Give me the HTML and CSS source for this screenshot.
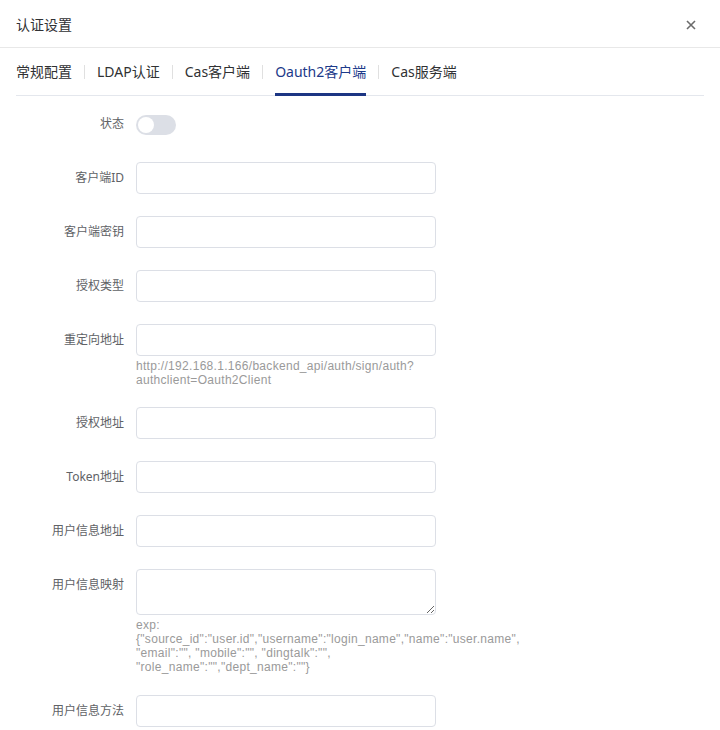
FILE: index.html
```html
<!DOCTYPE html>
<html lang="zh-CN">
<head>
<meta charset="utf-8">
<title>认证设置</title>
<link rel="stylesheet" href="styles.css">
</head>
<body>
<div class="dialog">
  <div class="header">
    <span class="title">认证设置</span>
    <svg class="close" width="10" height="10" viewBox="0 0 10 10"><path d="M1 1L9 9M9 1L1 9" stroke="#6b6b6b" stroke-width="1.6" fill="none"/></svg>
  </div>
  <div class="tabs">
    <div class="tab">常规配置</div>
    <span class="sep"></span>
    <div class="tab">LDAP认证</div>
    <span class="sep"></span>
    <div class="tab">Cas客户端</div>
    <span class="sep"></span>
    <div class="tab active">Oauth2客户端</div>
    <span class="sep"></span>
    <div class="tab">Cas服务端</div>
  </div>
  <form class="form">
    <div class="row">
      <label class="label">状态</label>
      <div class="control"><span class="switch"><span class="knob"></span></span></div>
    </div>
    <div class="row">
      <label class="label">客户端ID</label>
      <div class="control"><input class="input" type="text"></div>
    </div>
    <div class="row">
      <label class="label">客户端密钥</label>
      <div class="control"><input class="input" type="text"></div>
    </div>
    <div class="row">
      <label class="label">授权类型</label>
      <div class="control"><input class="input" type="text"></div>
    </div>
    <div class="row row-help">
      <label class="label">重定向地址</label>
      <div class="control">
        <input class="input" type="text">
        <div class="help">http://192.168.1.166/backend_api/auth/sign/auth?<br>authclient=Oauth2Client</div>
      </div>
    </div>
    <div class="row">
      <label class="label">授权地址</label>
      <div class="control"><input class="input" type="text"></div>
    </div>
    <div class="row">
      <label class="label">Token地址</label>
      <div class="control"><input class="input" type="text"></div>
    </div>
    <div class="row">
      <label class="label">用户信息地址</label>
      <div class="control"><input class="input" type="text"></div>
    </div>
    <div class="row row-help row-help-lg">
      <label class="label">用户信息映射</label>
      <div class="control">
        <textarea class="textarea"></textarea>
        <div class="help">exp:<br>{"source_id":"user.id","username":"login_name","name":"user.name",<br>"email":"", "mobile":"", "dingtalk":"",<br>"role_name":"","dept_name":""}</div>
      </div>
    </div>
    <div class="row">
      <label class="label">用户信息方法</label>
      <div class="control"><input class="input" type="text"></div>
    </div>
  </form>
</div>
</body>
</html>
```

FILE: styles.css
```css
html, body {
  margin: 0;
  padding: 0;
  background: #ffffff;
}
body {
  font-family: "Noto Sans", "Noto Sans CJK SC", sans-serif;
  color: #303133;
  width: 720px;
  height: 730px;
  overflow: hidden;
}
.dialog {
  width: 720px;
}
.header {
  height: 48px;
  box-sizing: border-box;
  border-bottom: 1px solid #e8e8e8;
  display: flex;
  align-items: center;
  justify-content: space-between;
  padding: 0 24px 0 16px;
}
.title {
  font-size: 14px;
  color: #303133;
  line-height: 20px;
  margin-top: 2px;
}
.close {
  display: block;
  margin-top: 2px;
}
.tabs {
  margin: 0 16px;
  height: 48px;
  box-sizing: border-box;
  border-bottom: 1px solid #e4e7ed;
  display: flex;
  align-items: stretch;
}
.tab {
  font-size: 14px;
  line-height: 20px;
  color: #303133;
  display: flex;
  align-items: center;
  border-bottom: 2px solid transparent;
  margin-bottom: -1px;
  padding-top: 1px;
  white-space: nowrap;
}
.tab.active {
  color: #1c3a8a;
  border-bottom: 3px solid #1c3583;
  padding-top: 2px;
}
.sep {
  width: 1px;
  height: 14px;
  background: #e0e0e0;
  align-self: center;
  margin: 1px 12px 0;
}
.form {
  padding-top: 12px;
  margin: 0;
}
.row {
  display: flex;
  align-items: flex-start;
  margin-bottom: 22px;
}
.row-help {
  margin-bottom: 20px;
}
.row-help-lg {
  margin-bottom: 21px;
}
.label {
  width: 136px;
  box-sizing: border-box;
  padding-right: 12px;
  text-align: right;
  font-size: 12px;
  line-height: 32px;
  color: #606266;
  flex: none;
}
.control {
  flex: none;
  width: 420px;
}
.switch {
  display: inline-block;
  position: relative;
  width: 40px;
  height: 20px;
  border-radius: 10px;
  background: #dcdfe6;
  margin-top: 7px;
  vertical-align: top;
}
.knob {
  position: absolute;
  left: 2px;
  top: 2px;
  width: 16px;
  height: 16px;
  border-radius: 50%;
  background: #ffffff;
}
.input {
  display: block;
  width: 300px;
  height: 32px;
  box-sizing: border-box;
  border: 1px solid #dcdfe6;
  border-radius: 4px;
  padding: 0 12px;
  margin: 0;
  font-size: 12px;
  font-family: inherit;
  background: #fff;
  outline: none;
}
.textarea {
  display: block;
  width: 300px;
  height: 46px;
  box-sizing: border-box;
  border: 1px solid #dcdfe6;
  border-radius: 4px;
  padding: 5px 12px;
  margin: 0;
  font-size: 12px;
  font-family: inherit;
  background: #fff;
  outline: none;
}
.help {
  margin-top: 3px;
  font-family: "Liberation Sans", "Noto Sans CJK SC", sans-serif;
  font-size: 12px;
  letter-spacing: 0.3px;
  line-height: 14px;
  color: #9a9a9a;
  white-space: nowrap;
}
```
